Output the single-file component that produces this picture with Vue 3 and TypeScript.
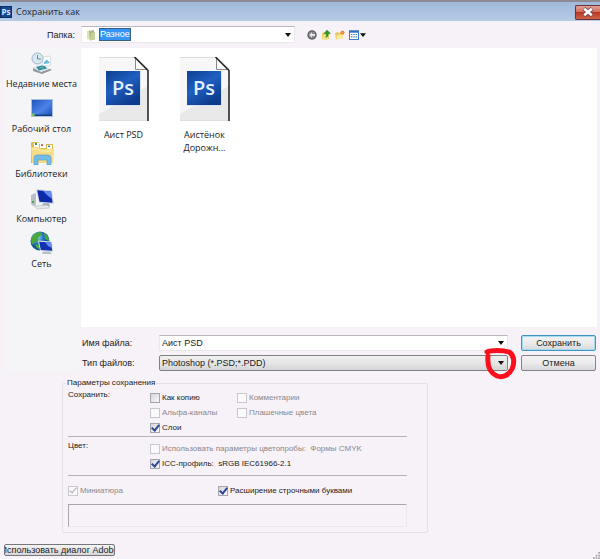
<script setup lang="ts">
import { ref } from 'vue'

interface Place { id: string; label: string }

const places: Place[] = [
  { id: 'recent', label: 'Недавние места' },
  { id: 'desktop', label: 'Рабочий стол' },
  { id: 'libraries', label: 'Библиотеки' },
  { id: 'computer', label: 'Компьютер' },
  { id: 'network', label: 'Сеть' },
]

const files: string[][] = [['Аист PSD'], ['Аистёнок', 'Дорожн...']]

const fileName = ref('Аист PSD')
const asCopy = ref(false)
const layers = ref(true)
const icc = ref(true)
const lowerCase = ref(true)
</script>

<template>
  <main class="dialog">
    <header class="titlebar">
      <svg class="app-icon" viewBox="0 0 12 12" aria-hidden="true">
        <rect width="12" height="12" fill="#0c2c63" />
        <rect x="1" y="1" width="10" height="10" fill="#17478f" />
        <text x="6" y="9" text-anchor="middle" class="ps-small">Ps</text>
      </svg>
      <h1 class="title">Сохранить как</h1>
      <button class="close" type="button" aria-label="Закрыть">
        <svg viewBox="0 0 12 10" aria-hidden="true">
          <path d="M2 1.5 L10 8.5 M10 1.5 L2 8.5" stroke="#5b4048" stroke-width="4" />
          <path d="M2.2 1.7 L9.8 8.3 M9.8 1.7 L2.2 8.3" stroke="#fff" stroke-width="2.6" />
        </svg>
      </button>
    </header>

    <div class="lookin">
      <label class="lookin-label" for="folder">Папка:</label>
      <div class="folder-box">
        <svg class="folder-icon" viewBox="0 0 10 12" aria-hidden="true">
          <path d="M1 2 L4 1 V11 L1 10Z" fill="#dfe3b0" />
          <path d="M3 2 L8 1 V10 L4 11.5Z" fill="#a9b983" />
          <path d="M5 4 L9 3 V10.5 L4 11.5Z" fill="#c5cf98" />
        </svg>
        <select id="folder" class="folder-select"><option>Разное</option></select>
        <svg class="arrow" viewBox="0 0 6 4" aria-hidden="true"><path d="M0 0H6L3 4Z" /></svg>
      </div>
      <div class="tools">
        <button type="button" aria-label="Назад">
          <svg viewBox="0 0 10 10" width="10" height="10">
            <circle cx="5" cy="5" r="4.7" fill="#5c5c60" /><circle cx="5" cy="5" r="3.4" fill="#88888c" />
            <path d="M5 2.2 L2.2 5 L5 7.8 V6 H8 V4 H5Z" fill="#e6e6e8" />
          </svg>
        </button>
        <button type="button" aria-label="На уровень вверх">
          <svg viewBox="0 0 10 10" width="10" height="10">
            <path d="M1 3 L6 2 L8 4 V9 L2 10 L1 9Z" fill="#e9cf62" /><path d="M3 5 L8 4 L6 10 L1 10Z" fill="#f7e795" />
            <path d="M6 0 L9.5 3.5 H7.5 Q7.6 7 4.5 7.5 Q5.8 6 5.3 3.5 H3Z" fill="#2c9c22" stroke="#187014" stroke-width=".4" />
          </svg>
        </button>
        <button type="button" aria-label="Новая папка">
          <svg viewBox="0 0 10 10" width="10" height="10">
            <path d="M0 3 L3 2 L4 3 L8 3 V8 L1 9.5Z" fill="#e8c85c" /><path d="M2 5 L9 4 L7.5 8.5 L1 9.5Z" fill="#fae99c" />
            <circle cx="7.5" cy="2.6" r="1.9" fill="#f06a32" /><path d="M7.5 .3V5M5.2 2.6H10" stroke="#f9a060" stroke-width=".7" />
          </svg>
        </button>
        <button type="button" aria-label="Вид">
          <svg viewBox="0 0 17 10" width="17" height="10">
            <rect x=".5" y="1" width="9" height="8.5" fill="#fff" stroke="#3e80c4" />
            <rect x="0" y=".5" width="10" height="2.2" fill="#2f74bd" />
            <path d="M2 4.5H8M2 6.9H8" stroke="#4a86a8" stroke-width="1.2" stroke-dasharray="1.4 .9" />
            <path d="M11 3.2H17L14 7Z" fill="#111" />
          </svg>
        </button>
      </div>
    </div>

    <div class="body">
      <nav class="places" aria-label="Места">
        <button v-for="p in places" :key="p.id" class="place" type="button">
          <svg v-if="p.id === 'recent'" viewBox="0 0 24 24">
            <path d="M3 17 L12 14 L22 19 L12 23 L3 20Z" fill="#8e979c" /><path d="M3 17 L12 13.5 L21 17.5 L11 21Z" fill="#e8edef" />
            <path d="M6 16 L14 14 L17 17.5 L9 19.5Z" fill="#2684a8" /><path d="M8 17.5 L12 15 L15 17.7Z" fill="#5cb08a" />
            <path d="M12 6 L20 5 L21 14 L13 15Z" fill="#fff" stroke="#c1c9cf" stroke-width=".6" />
            <path d="M14 11 L17 8.5 L20 12 L14 13Z" fill="#68b9de" />
            <circle cx="7.5" cy="7.5" r="5.5" fill="#dae8f1" stroke="#a3b4c1" /><path d="M7.5 4V8H11" fill="none" stroke="#6e8799" />
          </svg>
          <svg v-else-if="p.id === 'desktop'" viewBox="0 0 24 24">
            <defs><linearGradient id="desk" x2="1" y2="1"><stop stop-color="#2354c0" /><stop offset=".55" stop-color="#4b83e6" /><stop offset="1" stop-color="#1d4fb8" /></linearGradient></defs>
            <rect x="1" y="3" width="22" height="18" fill="#a9c0df" /><rect x="2" y="4" width="20" height="16" fill="url(#desk)" />
            <path d="M2 18.5H22V20H2Z" fill="#193f83" /><rect x="2" y="17.5" width="2.6" height="2.6" fill="#7ac657" />
          </svg>
          <svg v-else-if="p.id === 'libraries'" viewBox="0 0 24 24">
            <path d="M1 2 Q1 1 2 1 H8 L10 3 H23 V22 H1Z" fill="#dfb84e" />
            <path d="M4 2H9V6H4ZM10 3H16V7H10ZM17 4H22V8H17Z" fill="#fff" />
            <path d="M5 2H7V4H5Z" fill="#3a9755" /><path d="M11 3.3H13V5H11Z" fill="#cf4b40" /><path d="M18 4.5H20V6H18Z" fill="#3d81ca" />
            <path d="M1 6 H9 L11 8 H24 L23 22 H2Z" fill="#f6dc84" /><path d="M2 8H8L10 10H22" stroke="#fff1b4" fill="none" />
            <path d="M4 24 V17 Q4 14 7 14 H18 Q21 14 21 17 V24 H17 V19 H8 V24Z" fill="#76bde6" stroke="#4a98ca" stroke-width=".6" />
          </svg>
          <svg v-else-if="p.id === 'computer'" viewBox="0 0 24 24">
            <path d="M1 9 L6 7 V19 L3 20 L1 18Z" fill="#b7c0c7" /><path d="M2 15h2v2H2z" fill="#55a444" />
            <path d="M6 3 L22 4.5 L24 18 L9 17Z" fill="#d3dbe1" /><path d="M7.2 4.2 L21 5.6 L22.6 16.7 L9.5 15.8Z" fill="#0f2bad" />
            <path d="M13 4.8 L21 5.6 L22 13 Q17 10 13 4.8Z" fill="#668df0" />
            <path d="M13 17.2H19L20 20H12Z" fill="#a1adb5" /><path d="M4 20 L17 19 L20 22 L7 23Z" fill="#e2e7ea" stroke="#aab3ba" stroke-width=".5" />
          </svg>
          <svg v-else viewBox="0 0 24 24">
            <defs><radialGradient id="globe" cx=".35" cy=".3"><stop stop-color="#a4dffa" /><stop offset=".6" stop-color="#2a7fd0" /><stop offset="1" stop-color="#144f9a" /></radialGradient></defs>
            <circle cx="10" cy="10" r="9.5" fill="url(#globe)" />
            <path d="M2 6 Q5 1 10 1 L12 3 L8 7 L9 10 L5 11 L3 14 Q0 10 2 6ZM14 2 Q19 5 19 10 L15 8ZM5 14 L10 13 L9 18 Q6 17 5 14Z" fill="#48a83c" />
            <path d="M8 9.5 L22 10.5 L23.5 21 L10 20Z" fill="#d8e0e6" /><path d="M9.2 10.8 L21 11.6 L22.2 19.7 L10.8 18.9Z" fill="#1230b0" />
            <path d="M15 11.2 L21 11.6 L21.8 17 Q17 15 15 11.2Z" fill="#658cf0" /><path d="M13 20.5H20L22 23H12Z" fill="#b6c1c9" />
          </svg>
          <span>{{ p.label }}</span>
        </button>
      </nav>

      <div class="content">
        <ul class="files">
          <li v-for="(lines, i) in files" :key="i" class="file">
            <svg class="file-icon" viewBox="0 0 50 64" aria-hidden="true">
              <defs><linearGradient :id="'ps' + i" x2=".6" y2="1"><stop stop-color="#0f3f91" /><stop offset=".5" stop-color="#1f5fc0" /><stop offset="1" stop-color="#0d3c8d" /></linearGradient></defs>
              <path d="M0 0H36L49 13V64H0Z" fill="#f7f7f7" />
              <path d="M0 64V57L49 29V64Z" fill="#e9e9e9" />
              <path d="M0 .5H36" stroke="#dcdcdc" />
              <path d="M0 63.5H49" stroke="#e0e0e0" />
              <path d="M36.5 .5V12.5H49Z" fill="#fff" stroke="#888" />
              <path d="M35.5 0L49 13.5V64" fill="none" stroke="#292929" stroke-width="1.6" />
              <rect x="7" y="14" width="35" height="35" fill="#d6e1f2" />
              <rect x="7" y="14" width="34" height="34" :fill="'url(#ps' + i + ')'" />
              <text x="24" y="38" text-anchor="middle" class="ps-large">Ps</text>
            </svg>
            <span v-for="line in lines" :key="line">{{ line }}</span>
          </li>
        </ul>

        <form class="form" @submit.prevent>
          <label for="name">Имя файла:</label>
          <div class="field">
            <input id="name" v-model="fileName" type="text" />
            <svg class="arrow" viewBox="0 0 6 4" aria-hidden="true"><path d="M0 0H6L3 4Z" /></svg>
          </div>
          <button class="action primary" type="submit">Сохранить</button>

          <label for="type">Тип файлов:</label>
          <div class="field type-field">
            <select id="type"><option>Photoshop (*.PSD;*.PDD)</option></select>
            <svg class="arrow" viewBox="0 0 6 4" aria-hidden="true"><path d="M0 0H6L3 4Z" /></svg>
            <svg class="marker" viewBox="0 0 34 34" aria-hidden="true">
              <path d="M4 5 C8 3 20 3 26 5 C31 8 32 15 29 22 C26 28 20 31 14 29 C7 26 4 19 5 9" />
            </svg>
          </div>
          <button class="action" type="button">Отмена</button>
        </form>
      </div>
    </div>

    <fieldset class="options">
      <legend>Параметры сохранения</legend>
      <div class="group">
        <span class="group-title">Сохранить:</span>
        <label class="check"><input v-model="asCopy" type="checkbox" />Как копию</label>
        <label class="check off"><input type="checkbox" disabled />Комментарии</label>
        <label class="check off second"><input type="checkbox" disabled />Альфа-каналы</label>
        <label class="check off"><input type="checkbox" disabled />Плашечные цвета</label>
        <label class="check second"><input v-model="layers" type="checkbox" />Слои</label>
      </div>
      <hr />
      <div class="group colour">
        <span class="group-title">Цвет:</span>
        <label class="check off wide"><input type="checkbox" disabled />Использовать параметры цветопробы:&nbsp; Формы CMYK</label>
        <label class="check wide second"><input v-model="icc" type="checkbox" />ICC-профиль:&nbsp; sRGB IEC61966-2.1</label>
      </div>
      <hr />
      <div class="pair">
        <label class="check off"><input type="checkbox" checked disabled />Миниатюра</label>
        <label class="check"><input v-model="lowerCase" type="checkbox" />Расширение строчными буквами</label>
      </div>
      <output class="message" aria-label="Сообщение"></output>
    </fieldset>

    <footer class="footer">
      <button class="adobe" type="button"><span>Использовать диалог Adobe</span></button>
      <svg class="grip" viewBox="0 0 8 8" aria-hidden="true">
        <path d="M6 0h2v2H6zM3 3h2v2H3zM6 3h2v2H6zM0 6h2v2H0zM3 6h2v2H3zM6 6h2v2H6z" fill="#aaa6ab" />
      </svg>
    </footer>
  </main>
</template>

<style>
body { margin: 0; background: #f7f2f7; }
</style>

<style scoped>
* { box-sizing: border-box; }
.dialog {
  display: flex;
  flex-direction: column;
  min-height: 100vh;
  background: #f7f2f7;
  color: #222;
  font: 9px/14px "Liberation Sans", Arial, sans-serif;
}
button, input, select { font: inherit; color: inherit; margin: 0; padding: 0; }
.titlebar {
  display: flex;
  align-items: center;
  height: 21px;
  padding-top: 1px;
  border-top: 2px solid #8b8b91;
  background: linear-gradient(#a0b9d9, #b5cbe6);
}
.app-icon { width: 12px; height: 12px; }
.ps-small { font: bold 8px "Open Sans", sans-serif; fill: #d4e6ff; }
.title { flex: 1; margin: 0 0 0 4px; font: 9px/14px "Open Sans", "Noto Sans", sans-serif; color: #1c2634; }
.close {
  display: grid;
  place-items: center;
  width: 25px;
  height: 15px;
  border: 1px solid #67323a;
  border-right: 0;
  border-radius: 2px 0 0 2px;
  background: linear-gradient(#e3a297, #d0695a 48%, #b93722 50%, #cf624a);
}
.close svg { width: 12px; height: 10px; }
.lookin { display: flex; align-items: center; height: 27px; }
.lookin-label { width: 81px; padding-right: 6px; text-align: right; }
.folder-box {
  display: flex;
  align-items: center;
  width: 214px;
  height: 17px;
  padding: 0 3px 0 4px;
  border: 1px solid #ece8ed;
  border-top-color: #b8b6bc;
  background: #fff;
}
.folder-icon { width: 10px; height: 12px; margin-right: 3px; }
.folder-select {
  appearance: none;
  height: 13px;
  border: 1px solid #3a5f87;
  border-radius: 0;
  background: #3594f5;
  color: #fff;
  line-height: 11px;
}
.arrow { flex: none; width: 6px; height: 4px; margin-left: auto; fill: #111; }
.tools { display: flex; gap: 4px; margin-left: 12px; }
.tools button { display: flex; border: 0; background: none; }
.body { display: flex; }
.places {
  display: flex;
  flex-direction: column;
  width: 73px;
  margin: 0 3px 0 5px;
  padding-top: 3px;
  background: #f5f5f8;
}
.place {
  display: flex;
  flex-direction: column;
  align-items: center;
  height: 45px;
  border: 0;
  background: none;
  font: 9px/14px "Open Sans", "Noto Sans", sans-serif;
  white-space: nowrap;
}
.place svg { width: 24px; height: 24px; margin-bottom: 2px; }
.content { flex: 1; min-width: 0; }
.files {
  display: flex;
  height: 279px;
  margin: 0 3px 0 0;
  padding: 9px 2px;
  background: #fff;
  list-style: none;
}
.file {
  display: flex;
  flex-direction: column;
  align-items: center;
  width: 81px;
  font: 9px/13px "Open Sans", "Noto Sans", sans-serif;
}
.file-icon { width: 50px; height: 64px; margin-bottom: 7px; }
.ps-large { font: 600 20px "Open Sans", sans-serif; fill: #e3efff; }
.form {
  display: grid;
  grid-template-columns: 77px 1fr 75px;
  grid-auto-rows: 17px;
  row-gap: 3px;
  align-items: center;
  padding: 7px 4px 0 1px;
}
.field {
  position: relative;
  display: flex;
  align-items: center;
  height: 16px;
  margin-right: 13px;
  padding: 0 3px 0 2px;
  border: 1px solid #e9e5ea;
  border-top-color: #bab8be;
  background: #fff;
}
.field input, .field select { flex: 1; min-width: 0; height: 14px; border: 0; background: none; outline: 0; }
.field select { appearance: none; }
.type-field { border: 1px solid #818185; border-radius: 2px; background: linear-gradient(#f1f0f1, #e7e6e7 50%, #d5d4d6); }
.marker { position: absolute; top: -9px; right: -10px; width: 34px; height: 34px; pointer-events: none; }
.marker path { fill: none; stroke: #fb0f1c; stroke-width: 5; stroke-linecap: round; stroke-linejoin: round; }
.action {
  height: 16px;
  border: 1px solid #858488;
  border-radius: 2px;
  background: linear-gradient(#f4f3f4, #ebeaec 50%, #d8d7da);
  line-height: 14px;
}
.primary { border-color: #3f97c0; box-shadow: inset 0 0 0 1px #a6dcf2; }
.options {
  min-width: 0;
  width: 61%;
  margin: 6px 0 0 62px;
  padding: 1px 20px 5px 5px;
  border: 1px solid #e2e0e8;
  border-radius: 2px;
  font: 8px/15px "Liberation Sans", Arial, sans-serif;
}
.options legend { margin-left: -2px; padding: 0 1px; line-height: 12px; }
.group { display: grid; grid-template-columns: 82px 87px 1fr; }
.group-title { line-height: 10px; }
.colour { padding-bottom: 3px; }
.second { grid-column-start: 2; }
.check { display: flex; align-items: center; gap: 2px; white-space: nowrap; }
.wide { grid-column: 2 / -1; }
.check input {
  appearance: none;
  display: grid;
  place-items: center;
  flex: none;
  width: 10px;
  height: 10px;
  border: 1px solid #a6a5ac;
  background: linear-gradient(135deg, #d5d5da, #fafafa);
}
.check input:checked::after {
  content: "";
  width: 3px;
  height: 6px;
  margin-top: -2px;
  border: solid #2c4796;
  border-width: 0 2px 2px 0;
  transform: rotate(40deg);
}
.off { color: #8b878c; }
.check input:disabled { border-color: #c9c7cd; background: #faf9fb; }
.check input:disabled:checked::after { border-color: #aaa7ad; border-width: 0 1px 1px 0; }
.options hr { margin: 1px 0 4px; border: 0; border-top: 1px solid #b5b1b6; }
.pair { display: grid; grid-template-columns: 150px 1fr; padding-top: 3px; }
.message {
  display: block;
  height: 23px;
  margin-top: 6px;
  border: 1px solid #ece8ed;
  border-top-color: #aaa6ac;
  border-left-color: #aaa6ac;
}
.footer { display: flex; align-items: flex-end; justify-content: space-between; margin-top: auto; padding-left: 4px; }
.adobe {
  display: flex;
  justify-content: center;
  width: 111px;
  height: 12px;
  margin-bottom: 3px;
  border: 1px solid #77767a;
  border-radius: 2px;
  background: linear-gradient(#f5f4f5, #d7d6d9);
  line-height: 10px;
  overflow: hidden;
  white-space: nowrap;
}
.grip { width: 7px; height: 7px; }
</style>
